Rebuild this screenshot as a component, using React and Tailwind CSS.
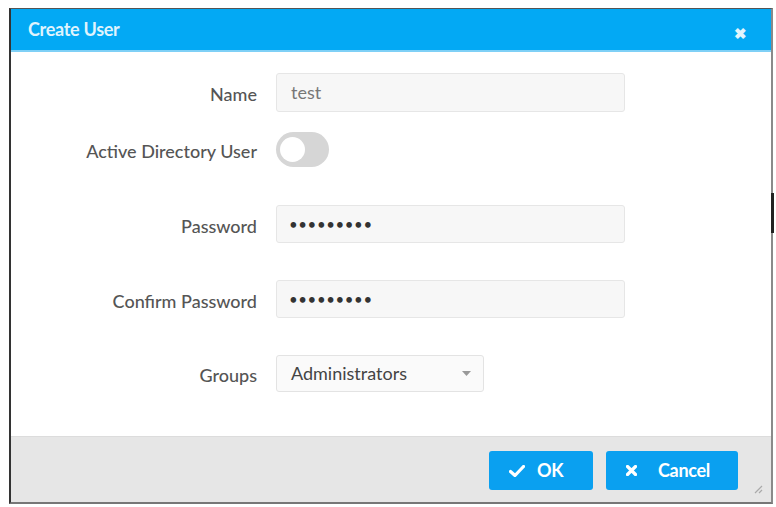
import React from "react";

function Field({ label, children, mt, h }) {
  return (
    <div className={`flex items-center ${mt}`}>
      <div className="w-[246px] pt-[3px] text-right text-[18px] text-[#555] font-medium leading-none">
        {label}
      </div>
      <div className={`ml-[19px] flex items-center ${h}`}>{children}</div>
    </div>
  );
}

export default function App() {
  return (
    <div
      className="w-[776px] h-[507px] bg-white pt-[8px] pl-[9px]"
      style={{ fontFamily: "Lato, 'Open Sans', 'Liberation Sans', sans-serif" }}
    >
      <div className="relative flex h-[496px] w-[764px] flex-col border-t border-l-2 border-r-2 border-b-2 border-t-[#555] border-l-[#333] border-r-[#8a8a8a] border-b-[#777] bg-white">
        {/* header */}
        <div className="flex h-[43px] shrink-0 items-center justify-between border-b-2 border-b-[#7fd0f6] bg-[#03a9f4] pl-[17px] pr-[24px]">
          <span className="text-[18px] font-bold text-[#dff3fd] tracking-[-0.3px]">Create User</span>
          <span className="mt-[8px] text-[15px] font-bold leading-none text-[#e3f5fd]">✖</span>
        </div>

        {/* body */}
        <div className="flex flex-1 flex-col">
          <Field label="Name" mt="mt-[21px]" h="h-[39px]">
            <div className="flex h-[39px] w-[349px] items-center rounded-[3px] border border-[#e6e6e6] bg-[#f7f7f7] px-[14px] text-[18px] text-[#777]">
              test
            </div>
          </Field>
          <Field label="Active Directory User" mt="mt-[19px]" h="h-[36px]">
            <div className="flex h-[35px] w-[53px] items-center rounded-full bg-[#d6d6d6] pl-[4px]">
              <div className="h-[25px] w-[25px] rounded-full bg-white" />
            </div>
          </Field>
          <Field label="Password" mt="mt-[38px]" h="h-[38px]">
            <div className="flex h-[38px] w-[349px] items-center rounded-[3px] border border-[#e6e6e6] bg-[#f7f7f7] px-[12px] text-[15px] tracking-[0.6px] text-[#333]">
              •••••••••
            </div>
          </Field>
          <Field label="Confirm Password" mt="mt-[37px]" h="h-[38px]">
            <div className="flex h-[38px] w-[349px] items-center rounded-[3px] border border-[#e6e6e6] bg-[#f7f7f7] px-[12px] text-[15px] tracking-[0.6px] text-[#333]">
              •••••••••
            </div>
          </Field>
          <Field label="Groups" mt="mt-[37px]" h="h-[37px]">
            <div className="flex h-[37px] w-[208px] items-center justify-between rounded-[3px] border border-[#e3e3e3] bg-[#fafafa] pl-[14px] pr-[12px] text-[18px] text-[#444]">
              <span>Administrators</span>
              <svg width="9" height="5" viewBox="0 0 9 5">
                <path d="M0 0 L9 0 L4.5 5 Z" fill="#999" />
              </svg>
            </div>
          </Field>
        </div>

        {/* footer */}
        <div className="flex h-[66px] shrink-0 items-start justify-end gap-[13px] border-t border-t-[#dcdcdc] bg-[#e6e6e6] pr-[33px] pt-[14px]">
          <button className="flex h-[39px] w-[104px] items-center justify-start gap-[12px] rounded-[3px] bg-[#0aa0f0] pl-[20px] text-[18px] font-bold text-white tracking-[-0.3px]">
            <svg width="16" height="12" viewBox="0 0 16 12">
              <path d="M1.5 6.5 L6 10.5 L14.5 1.5" stroke="white" strokeWidth="3.2" fill="none" strokeLinecap="round" strokeLinejoin="round" />
            </svg>
            <span>OK</span>
          </button>
          <button className="flex h-[39px] w-[132px] items-center justify-start gap-[21px] rounded-[3px] bg-[#0aa0f0] pl-[20px] text-[18px] font-bold text-white tracking-[-0.3px]">
            <svg width="11" height="11" viewBox="0 0 11 11">
              <path d="M1.5 1.5 L9.5 9.5 M9.5 1.5 L1.5 9.5" stroke="white" strokeWidth="3.2" strokeLinecap="round" />
            </svg>
            <span>Cancel</span>
          </button>
        </div>

        {/* resize grip */}
        <svg className="absolute bottom-[8px] right-[8px]" width="10" height="10" viewBox="0 0 10 10">
          <path d="M9 2 L2 9 M9 6 L6 9" stroke="#aaa" strokeWidth="1.2" />
        </svg>
        {/* scrollbar thumb */}
        <div className="absolute right-[-3px] top-[184px] h-[40px] w-[3px] bg-[#222]" />
      </div>
    </div>
  );
}
